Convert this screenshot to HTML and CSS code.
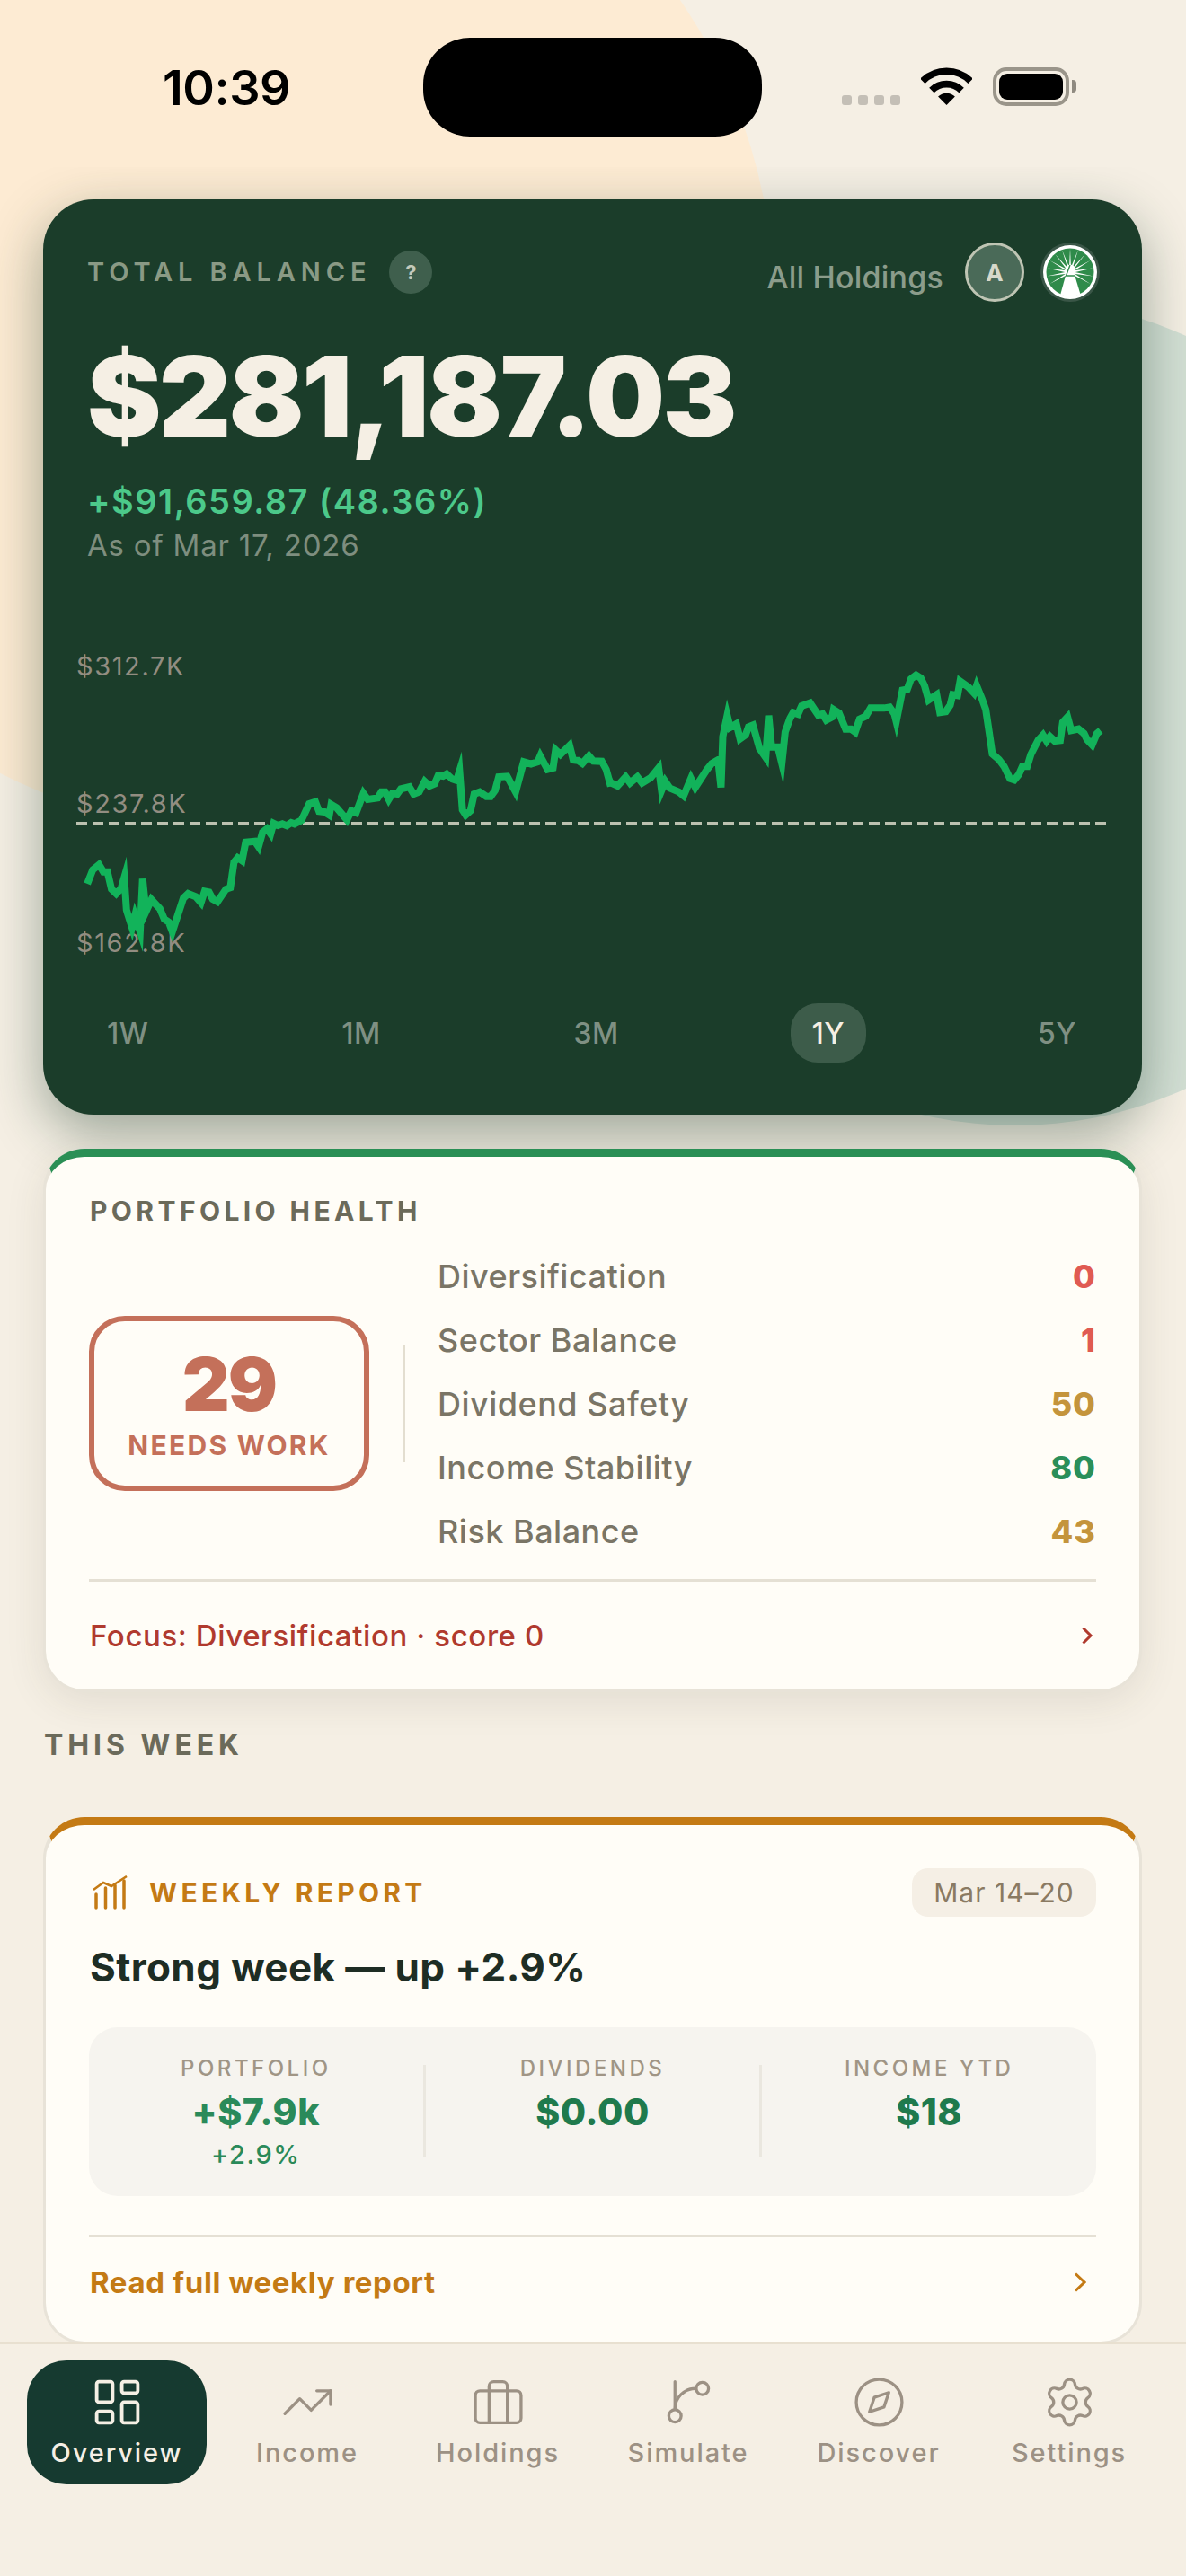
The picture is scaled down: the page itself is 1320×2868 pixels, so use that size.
FILE: index.html
```html
<!DOCTYPE html>
<html lang="en">
<head>
<meta charset="utf-8">
<title>Overview</title>
<link rel="stylesheet" href="styles.css">
</head>
<body>
<div class="screen">
  <div class="blob blob-peach"></div>
  <div class="blob blob-green"></div>

  <header class="status">
    <span class="time">10:39</span>
    <span class="island"></span>
    <span class="signal"><i></i><i></i><i></i><i></i></span>
    <svg class="wifi" viewBox="0 0 57 42" width="57" height="42">
      <path class="wifi-arc" d="M1.8 15.3A37.8 37.8 0 0 1 55.2 15.3"/>
      <path class="wifi-arc" d="M11.9 25.4A23.5 23.5 0 0 1 45.1 25.4"/>
      <path class="wifi-dot" d="M28.5 42L19.1 32.6A13.3 13.3 0 0 1 37.9 32.6Z"/>
    </svg>
    <span class="battery"><span class="battery-fill"></span></span>
    <span class="battery-nub"></span>
  </header>

  <main class="scroller">
    <section class="balance-card">
      <div class="balance-head">
        <div class="balance-title">
          <span class="balance-label">TOTAL BALANCE</span>
          <span class="help">?</span>
        </div>
        <div class="holdings">
          <span class="holdings-label">All Holdings</span>
          <span class="avatar">A</span>
          <svg class="logo" viewBox="0 0 66 66" width="66" height="66">
            <defs>
              <polygon id="ray" points="31.8,33 33,7 34.2,33"/>
              <clipPath id="logo-clip"><circle cx="33" cy="33" r="27"/></clipPath>
            </defs>
            <circle cx="33" cy="33" r="33" fill="#3a5647"/>
            <circle cx="33" cy="33" r="30" fill="#fff"/>
            <circle cx="33" cy="33" r="26.5" fill="#2f8b4a"/>
            <g fill="#fff">
              <use href="#ray"/>
              <use href="#ray" transform="rotate(20 33 33)"/>
              <use href="#ray" transform="rotate(40 33 33)"/>
              <use href="#ray" transform="rotate(60 33 33)"/>
              <use href="#ray" transform="rotate(80 33 33)"/>
              <use href="#ray" transform="rotate(100 33 33)"/>
              <use href="#ray" transform="rotate(120 33 33)"/>
              <use href="#ray" transform="rotate(-20 33 33)"/>
              <use href="#ray" transform="rotate(-40 33 33)"/>
              <use href="#ray" transform="rotate(-60 33 33)"/>
              <use href="#ray" transform="rotate(-80 33 33)"/>
              <use href="#ray" transform="rotate(-100 33 33)"/>
              <use href="#ray" transform="rotate(-120 33 33)"/>
              <circle cx="33" cy="30" r="5.5"/>
              <polygon clip-path="url(#logo-clip)" points="31,26 35,26 47,66 20,66"/>
            </g>
            <path d="M33 25L28.500 37H38" fill="none" stroke="#2f8b4a" stroke-width="1.4"/>
          </svg>
        </div>
      </div>
      <div class="balance-value">$281,187.03</div>
      <div class="balance-change">+$91,659.87 (48.36%)</div>
      <div class="balance-date">As of Mar 17, 2026</div>

      <svg class="chart" viewBox="48 627 1223 490" width="1223" height="490">
        <text class="chart-label" x="85" y="752">$312.7K</text>
        <text class="chart-label" x="85" y="905">$237.8K</text>
        <text class="chart-label" x="85" y="1060">$162.8K</text>
        <line class="chart-base" x1="85" y1="916.5" x2="1231" y2="916.5"/>
        <g transform="translate(40 680) scale(.40816 .33333)">
          <polyline class="chart-line" points="140,912 155,865 172,848 184,872 195,872 206,930 219,945 232,928 241,890 247,1000 262,1058 270,1018 284,1072 291,895 300,1005 315,965 338,995 350,1030 362,1040 372,1072 402,960 415,945 436,955 450,975 460,937 472,940 482,963 495,972 518,930 530,925 540,840 550,825 562,835 572,773 597,770 607,788 618,740 630,728 640,745 648,710 660,717 672,712 684,718 696,708 705,712 724,700 745,645 762,638 772,670 787,672 800,682 805,647 820,658 848,698 860,668 873,675 893,610 905,630 932,625 942,605 952,605 962,630 972,610 985,612 995,595 1018,588 1030,612 1045,605 1060,570 1073,585 1087,578 1097,550 1110,552 1120,545 1135,562 1147,567 1155,535 1163,665 1172,682 1185,668 1195,612 1210,605 1228,620 1240,620 1252,600 1262,555 1285,553 1308,605 1330,505 1350,512 1368,505 1375,485 1395,530 1410,525 1417,465 1430,480 1455,450 1465,498 1478,500 1490,510 1508,485 1520,502 1543,503 1555,530 1565,575 1575,572"/>
        </g>
        <g transform="translate(680 680) scale(.40816 .33333)">
          <polyline class="chart-line" points="-5,572 18,585 40,555 52,575 72,555 85,575 108,558 130,525 138,600 148,570 160,592 185,605 198,618 218,560 230,590 262,530 275,510 292,498 300,590 305,420 317,350 325,390 342,378 352,428 367,415 375,388 387,382 405,460 422,490 430,350 438,455 455,455 466,510 475,405 488,360 497,340 510,345 520,318 543,308 565,348 577,345 587,365 603,355 607,330 622,342 640,395 655,395 666,405 678,362 695,352 708,325 745,325 760,322 773,345 778,370 795,265 808,262 818,228 832,215 845,225 855,250 866,298 888,280 897,340 913,337 925,315 932,280 945,283 952,235 975,255 990,275 997,250 1012,295 1022,330 1040,478 1058,497 1072,520 1088,560 1100,565 1112,547 1122,520 1135,520 1145,480 1165,432 1178,415 1188,435 1197,420 1210,435 1225,433 1232,372 1245,355 1255,400 1275,395 1290,410 1298,430 1312,448 1325,410 1335,400"/>
        </g>
      </svg>

      <nav class="periods">
        <span class="period">1W</span>
        <span class="period">1M</span>
        <span class="period">3M</span>
        <span class="period period-active">1Y</span>
        <span class="period">5Y</span>
      </nav>
    </section>

    <section class="card card-health">
      <h2 class="health-title">PORTFOLIO HEALTH</h2>
      <div class="health-body">
        <div class="score">
          <span class="score-value">29</span>
          <span class="score-label">NEEDS WORK</span>
        </div>
        <span class="health-divider"></span>
        <ul class="metrics">
          <li class="metric"><span>Diversification</span><b class="tone-red">0</b></li>
          <li class="metric"><span>Sector Balance</span><b class="tone-red">1</b></li>
          <li class="metric"><span>Dividend Safety</span><b class="tone-amber">50</b></li>
          <li class="metric"><span>Income Stability</span><b class="tone-green">80</b></li>
          <li class="metric"><span>Risk Balance</span><b class="tone-amber">43</b></li>
        </ul>
      </div>
      <div class="card-foot foot-health">
        <span>Focus: Diversification · score 0</span>
        <svg class="chev" viewBox="0 0 14 20" width="14" height="20"><path d="M2.5 1.5L11 10L2.5 18.5"/></svg>
      </div>
    </section>

    <h2 class="section-title">THIS WEEK</h2>

    <section class="card card-week">
      <div class="week-head">
        <div class="week-brand">
          <svg class="week-icon" viewBox="0 0 40 38" width="40" height="38">
            <path class="week-bars" d="M4 21V36M14.500 14V36M25 11V36M35 6V36"/>
            <path class="week-trend" d="M1 16L12 8L21 12L38 1"/>
          </svg>
          <span class="week-label">WEEKLY REPORT</span>
        </div>
        <span class="week-date">Mar 14–20</span>
      </div>
      <h3 class="week-title">Strong week — up +2.9%</h3>
      <div class="stats">
        <div class="stat">
          <span class="stat-label">PORTFOLIO</span>
          <span class="stat-value stat-up">+$7.9k</span>
          <span class="stat-sub">+2.9%</span>
        </div>
        <span class="stat-divider"></span>
        <div class="stat">
          <span class="stat-label">DIVIDENDS</span>
          <span class="stat-value">$0.00</span>
        </div>
        <span class="stat-divider"></span>
        <div class="stat">
          <span class="stat-label">INCOME YTD</span>
          <span class="stat-value">$18</span>
        </div>
      </div>
      <div class="card-foot foot-week">
        <span>Read full weekly report</span>
        <svg class="chev chev-week" viewBox="0 0 14 22" width="14" height="22"><path d="M2 1.500L12 11L2 20.500"/></svg>
      </div>
    </section>
  </main>

  <nav class="tabbar">
    <a class="tab tab-active">
      <svg class="tab-icon" viewBox="0 0 24 24"><rect x="3" y="3" width="7" height="9" rx="1"/><rect x="14" y="3" width="7" height="5" rx="1"/><rect x="14" y="12" width="7" height="9" rx="1"/><rect x="3" y="16" width="7" height="5" rx="1"/></svg>
      <span>Overview</span>
    </a>
    <a class="tab">
      <svg class="tab-icon" viewBox="0 0 24 24"><polyline points="22 7 13.500 15.500 8.500 10.500 2 17"/><polyline points="16 7 22 7 22 13"/></svg>
      <span>Income</span>
    </a>
    <a class="tab">
      <svg class="tab-icon" viewBox="0 0 24 24"><path d="M16 21V5a2 2 0 0 0-2-2h-4a2 2 0 0 0-2 2v16"/><rect x="2" y="7" width="20" height="14" rx="2"/></svg>
      <span>Holdings</span>
    </a>
    <a class="tab">
      <svg class="tab-icon" viewBox="0 0 24 24"><line x1="6" y1="3" x2="6" y2="15"/><circle cx="18" cy="6" r="2.700"/><circle cx="6" cy="18" r="2.700"/><path d="M6 15a9 9 0 0 1 9-9"/></svg>
      <span>Simulate</span>
    </a>
    <a class="tab">
      <svg class="tab-icon" viewBox="0 0 24 24"><circle cx="12" cy="12" r="10"/><polygon points="16.240 7.760 14.120 14.120 7.760 16.240 9.880 9.880"/></svg>
      <span>Discover</span>
    </a>
    <a class="tab">
      <svg class="tab-icon" viewBox="0 0 24 24"><path d="M9.671 4.136a2.34 2.34 0 0 1 4.659 0 2.34 2.34 0 0 0 3.319 1.915 2.34 2.34 0 0 1 2.33 4.033 2.34 2.34 0 0 0 0 3.831 2.34 2.34 0 0 1-2.33 4.033 2.34 2.34 0 0 0-3.319 1.915 2.34 2.34 0 0 1-4.659 0 2.34 2.34 0 0 0-3.32-1.915 2.34 2.34 0 0 1-2.33-4.033 2.34 2.34 0 0 0 0-3.831A2.34 2.34 0 0 1 6.35 6.051a2.34 2.34 0 0 0 3.32-1.915"/><circle cx="12" cy="12" r="3"/></svg>
      <span>Settings</span>
    </a>
  </nav>
</div>
</body>
</html>
```

FILE: styles.css
```css
* { box-sizing: border-box; }

html, body {
  margin: 0;
  padding: 0;
}

body {
  font-family: Inter, "Liberation Sans", sans-serif;
  background: #f5efe4;
}

.screen {
  position: relative;
  width: 1320px;
  height: 2868px;
  overflow: hidden;
  background: #f5efe4;
}

.blob {
  position: absolute;
  border-radius: 50%;
}

.blob-peach {
  left: -321px;
  top: -256px;
  width: 1182px;
  height: 1182px;
  background: #fdebd3;
}

.blob-green {
  left: 670px;
  top: 333px;
  width: 920px;
  height: 920px;
  background: #d3dfd4;
}

/* status bar */
.status {
  position: relative;
  display: flex;
  align-items: center;
  height: 186px;
  padding: 8px 0 0 181px;
}

.time {
  width: 140px;
  margin-top: 1px;
  font-size: 54px;
  font-weight: 600;
  line-height: 64px;
  letter-spacing: -0.5px;
  color: #000;
  white-space: nowrap;
}

.island {
  width: 377px;
  height: 110px;
  margin-left: 150px;
  border-radius: 52px;
  background: #000;
}

.signal {
  display: flex;
  gap: 7px;
  margin: 29px 0 0 89px;
}

.signal i {
  width: 11px;
  height: 11px;
  border-radius: 3px;
  background: #c4bfb6;
}

.wifi {
  margin: -2px 0 0 23px;
}

.wifi-arc {
  fill: none;
  stroke: #000;
  stroke-width: 7.7;
}

.wifi-dot {
  fill: #000;
}

.battery {
  display: flex;
  align-items: center;
  justify-content: center;
  width: 85px;
  height: 43px;
  margin: -1px 0 0 23px;
  border: 4px solid #9a958a;
  border-radius: 15px;
}

.battery-fill {
  width: 71px;
  height: 29px;
  border-radius: 9px;
  background: #000;
}

.battery-nub {
  width: 5px;
  height: 14px;
  margin: -2px 0 0 3px;
  border-radius: 0 4px 4px 0;
  background: #8f8a80;
}

/* scroll area */
.scroller {
  position: relative;
  height: 2421px;
  padding: 36px 49px 0 48px;
  overflow: hidden;
}

.balance-card {
  height: 1019px;
  border-radius: 56px;
  background: #1b3d2a;
  box-shadow: 0 20px 60px rgba(26, 60, 42, 0.42);
}

.balance-head {
  display: flex;
  justify-content: space-between;
  align-items: center;
  padding: 48px 47px 0 49px;
}

.balance-title {
  display: flex;
  align-items: center;
  gap: 20px;
}

.balance-label {
  font-size: 29px;
  font-weight: 600;
  letter-spacing: 5.9px;
  line-height: 48px;
  color: #8a9a85;
}

.help {
  display: flex;
  align-items: center;
  justify-content: center;
  width: 48px;
  height: 48px;
  border-radius: 50%;
  background: #3f5f4d;
  font-size: 22px;
  font-weight: 700;
  color: #c3cabc;
}

.holdings {
  display: flex;
  align-items: center;
}

.holdings-label {
  font-size: 34px;
  font-weight: 500;
  line-height: 54px;
  margin-top: 12px;
  letter-spacing: 0.2px;
  color: #8b9c8b;
}

.avatar {
  display: flex;
  align-items: center;
  justify-content: center;
  width: 66px;
  height: 66px;
  margin: 0 18px 0 24px;
  border: 3px solid #bfc5b4;
  border-radius: 50%;
  background: #4a6a58;
  font-size: 26px;
  font-weight: 700;
  color: #d6d9cb;
}

.logo {
  display: block;
}

.balance-value {
  margin-top: 43px;
  padding-left: 49px;
  font-size: 124px;
  font-weight: 900;
  line-height: 124px;
  letter-spacing: -2.6px;
  color: #f5efe4;
}

.balance-change {
  margin-top: 31px;
  padding-left: 49px;
  font-size: 38px;
  font-weight: 600;
  line-height: 48px;
  letter-spacing: 1.5px;
  color: #4cc98a;
}

.balance-date {
  margin-top: 5px;
  padding-left: 49px;
  font-size: 33px;
  font-weight: 400;
  line-height: 40px;
  letter-spacing: 0.8px;
  color: #7e8e7f;
}

.chart {
  display: block;
}

.chart-label {
  font-size: 29px;
  font-weight: 400;
  letter-spacing: 1.6px;
  fill: #928d81;
}

.chart-base {
  stroke: #bcc1b0;
  stroke-width: 3;
  stroke-dasharray: 12 6;
}

.chart-line {
  fill: none;
  stroke: #12b35a;
  stroke-width: 8;
  stroke-linejoin: miter;
  stroke-miterlimit: 8;
  vector-effect: non-scaling-stroke;
}

.periods {
  display: flex;
  justify-content: space-between;
  padding: 0 49px 0 47px;
}

.period {
  display: flex;
  align-items: center;
  justify-content: center;
  height: 66px;
  padding: 0 24px;
  border-radius: 30px;
  font-size: 32px;
  font-weight: 500;
  letter-spacing: 0.5px;
  color: #7f9083;
}

.period-active {
  background: #3d5c4a;
  color: #f5efe4;
}

/* shared card */
.card {
  border: 3px solid #e8e3d8;
  border-top-width: 9px;
  border-radius: 46px;
  background: #fffdf7;
}

.card-foot {
  display: flex;
  align-items: center;
  justify-content: space-between;
  border-top: 3px solid #e5e0d4;
  font-size: 33px;
}

.chev {
  fill: none;
  stroke-width: 3;
}

/* health */
.card-health {
  margin-top: 38px;
  padding: 40px 48px 0;
  border-top-color: #2a8f55;
  box-shadow: 0 10px 44px rgba(60, 60, 40, 0.1);
}

.health-title {
  margin: 0;
  padding-left: 1px;
  font-size: 30px;
  font-weight: 700;
  line-height: 40px;
  letter-spacing: 4.4px;
  color: #6b6a5a;
}

.health-body {
  display: flex;
  align-items: center;
  margin-top: 17px;
}

.score {
  display: flex;
  flex-direction: column;
  align-items: center;
  justify-content: center;
  width: 312px;
  height: 195px;
  border: 6px solid #c4705a;
  border-radius: 40px;
  color: #c4705a;
}

.score-value {
  font-size: 82px;
  font-weight: 900;
  line-height: 90px;
  letter-spacing: -2px;
}

.score-label {
  margin-top: 2px;
  font-size: 30px;
  font-weight: 700;
  line-height: 40px;
  letter-spacing: 2.3px;
}

.health-divider {
  width: 3px;
  height: 130px;
  margin: 0 36px 0 37px;
  background: #e3ded0;
}

.metrics {
  flex: 1;
  margin: 0;
  padding: 0;
  list-style: none;
}

.metric {
  display: flex;
  justify-content: space-between;
  align-items: center;
  height: 71px;
  font-size: 36px;
  font-weight: 500;
  letter-spacing: 0.5px;
  color: #7a7566;
}

.metric b {
  font-weight: 800;
  letter-spacing: 1px;
}

.tone-red { color: #e05a52; }
.tone-amber { color: #c4943c; }
.tone-green { color: #2a8f5a; }

.foot-health {
  height: 123px;
  margin-top: 18px;
  padding: 0 3px 0 1px;
  font-weight: 500;
  letter-spacing: 0.6px;
  color: #b03a2e;
}

.foot-health .chev {
  stroke: #b03a2e;
}

.section-title {
  margin: 39px 0 60px 1px;
  font-size: 32px;
  font-weight: 700;
  line-height: 40px;
  letter-spacing: 4.9px;
  color: #6b6a5a;
}

/* weekly */
.card-week {
  padding: 48px 48px 0;
  border-top-color: #c47a14;
}

.week-head {
  display: flex;
  justify-content: space-between;
  align-items: center;
}

.week-brand {
  display: flex;
  align-items: center;
  gap: 23px;
  padding-left: 4px;
}

.week-icon {
  display: block;
}

.week-bars {
  fill: none;
  stroke: #c47a14;
  stroke-width: 3.500;
  stroke-linecap: round;
}

.week-trend {
  fill: none;
  stroke: #c47a14;
  stroke-width: 2.500;
}

.week-label {
  font-size: 30px;
  font-weight: 700;
  line-height: 40px;
  letter-spacing: 4.3px;
  color: #c47a14;
}

.week-date {
  width: 205px;
  height: 54px;
  border-radius: 18px;
  background: #f5efe5;
  font-size: 30px;
  line-height: 54px;
  letter-spacing: 1px;
  text-align: center;
  color: #8a7a62;
}

.week-title {
  margin: 28px 0 0 1px;
  font-size: 44px;
  font-weight: 700;
  line-height: 56px;
  letter-spacing: 0.4px;
  color: #1e2d24;
}

.stats {
  display: grid;
  grid-template-columns: 1fr 3px 1fr 3px 1fr;
  align-items: start;
  height: 188px;
  margin-top: 39px;
  padding-top: 31px;
  border-radius: 32px;
  background: #f6f4ef;
}

.stat {
  display: flex;
  flex-direction: column;
  align-items: center;
}

.stat-label {
  font-size: 24px;
  font-weight: 500;
  line-height: 30px;
  letter-spacing: 3.500px;
  color: #a09585;
}

.stat-value {
  margin-top: 8px;
  font-size: 41px;
  font-weight: 800;
  line-height: 50px;
  letter-spacing: 0.5px;
  color: #1f7a4d;
}

.stat-up {
  color: #2a8a5a;
}

.stat-sub {
  margin-top: 5px;
  font-size: 29px;
  font-weight: 500;
  line-height: 36px;
  letter-spacing: 1.500px;
  color: #2a8a5a;
}

.stat-divider {
  height: 103px;
  margin-top: 11px;
  background: #eae7df;
}

.foot-week {
  height: 103px;
  margin: 43px 0 16px;
  padding: 0 11px 0 1px;
  font-weight: 700;
  letter-spacing: 0.6px;
  color: #c47a14;
}

.foot-week .chev {
  stroke: #c47a14;
}

/* tab bar */
.tabbar {
  position: relative;
  display: grid;
  grid-template-columns: repeat(6, 212px);
  align-items: start;
  height: 261px;
  padding: 18px 24px 0;
  border-top: 3px solid #e8e0d0;
  background: #f5efe4;
}

.tab {
  display: flex;
  flex-direction: column;
  align-items: center;
  width: 200px;
  height: 138px;
  margin: 0 6px;
  padding-top: 16px;
  border-radius: 44px;
  font-size: 29px;
  font-weight: 500;
  line-height: 36px;
  letter-spacing: 1.900px;
  color: #9c9184;
}

.tab-icon {
  display: block;
  flex: none;
  width: 61px;
  height: 61px;
  margin-bottom: 8px;
  fill: none;
  stroke: #9c9184;
  stroke-width: 1.300;
  stroke-linecap: round;
  stroke-linejoin: round;
}

.tab-active {
  background: #163a30;
  color: #f5efe4;
}

.tab-active .tab-icon {
  stroke: #f5efe4;
  stroke-width: 1.500;
}
```
